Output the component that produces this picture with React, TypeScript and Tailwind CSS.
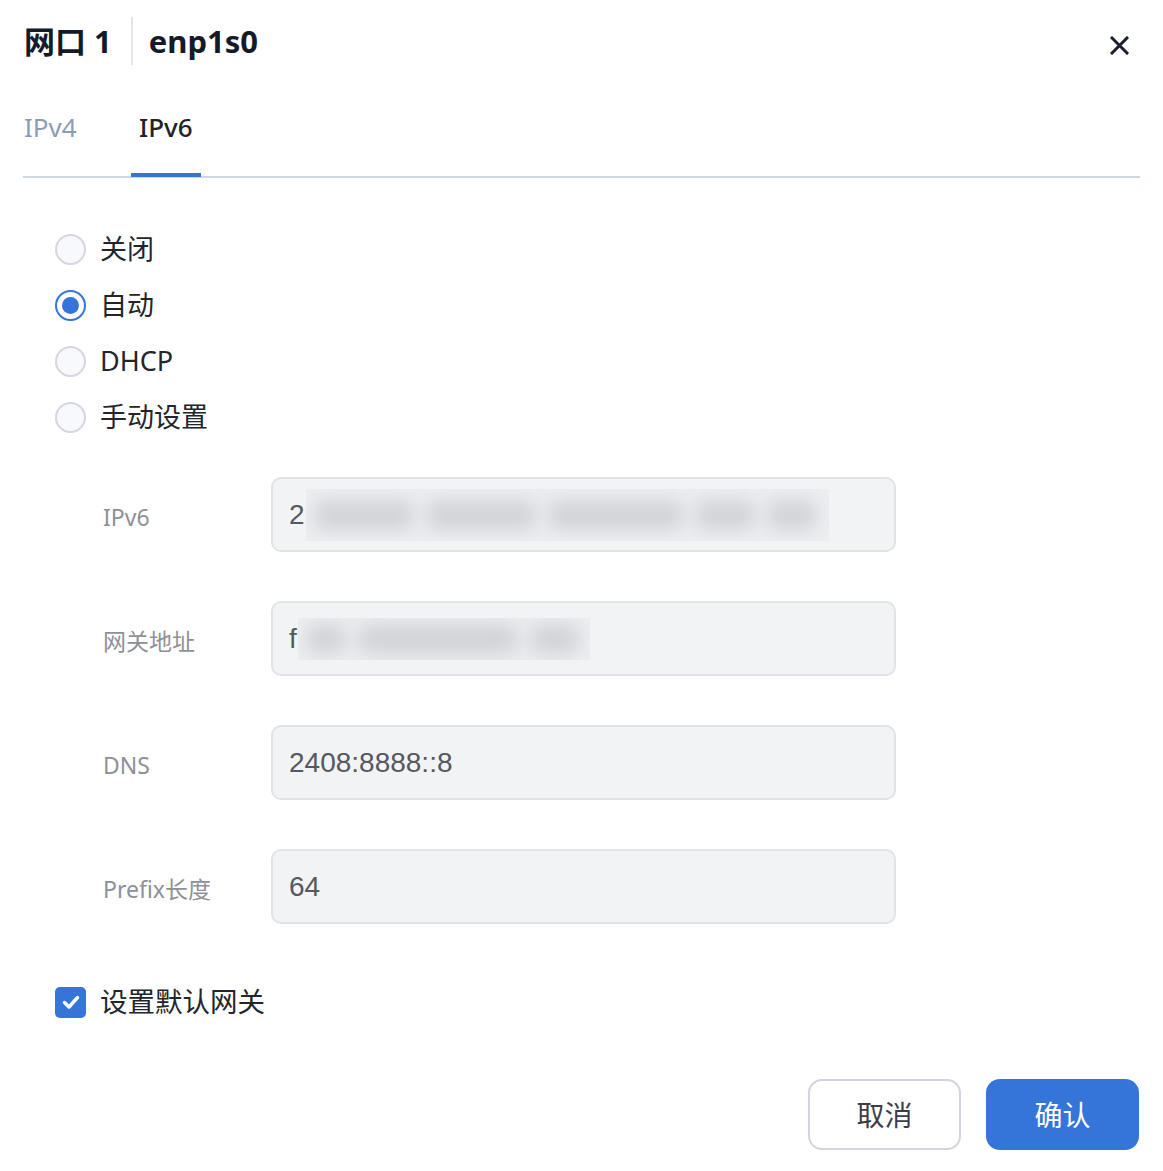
import React from "react";

const font = { fontFamily: '"Noto Sans", "Noto Sans CJK SC", sans-serif' };

function Radio({ checked, label }: { checked?: boolean; label: string }) {
  return (
    <div className="flex h-[56px] items-center">
      {checked ? (
        <span className="flex h-[31px] w-[31px] items-center justify-center rounded-full border-[2px] border-[#3574d9] bg-white">
          <span className="h-[17px] w-[17px] rounded-full bg-[#3574d9]" />
        </span>
      ) : (
        <span className="h-[31px] w-[31px] rounded-full border-[2px] border-[#d4d7e1] bg-[#f8f9fc]" />
      )}
      <span className="ml-[14px] text-[27px] leading-[36px] text-[#22252b]">{label}</span>
    </div>
  );
}

function Field({ label, children }: { label: string; children: React.ReactNode }) {
  return (
    <div className="ml-[80px] flex items-center">
      <div className="w-[168px] pt-[6px] text-[23px] text-[#8e9097]">{label}</div>
      <div
        className="flex h-[75px] w-[625px] items-center overflow-hidden rounded-[10px] border-[2px] border-[#e1e3e8] bg-[#f2f3f5] pl-[16px] text-[28px] text-[#555860]"
        style={{ fontFamily: '"Liberation Sans", Arial, sans-serif' }}
      >
        {children}
      </div>
    </div>
  );
}

function Blurred({ w, h, blobs }: { w: number; h: number; blobs: number[] }) {
  return (
    <span
      className="relative ml-[1px] flex items-center gap-[12px] overflow-hidden bg-[#edeef1] px-[8px]"
      style={{ width: w, height: h }}
    >
      {blobs.map((bw, i) => (
        <span
          key={i}
          className="h-[30px] shrink-0 rounded-[12px] bg-[#d2d3d8] blur-[9px]"
          style={{ width: bw }}
        />
      ))}
    </span>
  );
}

export default function App() {
  return (
    <div className="min-h-[1171px] w-[1163px] bg-white px-[23px]" style={font}>
      {/* Header */}
      <div className="flex h-[65px] items-end">
        <div className="flex h-[48px] w-full items-center">
          <span className="pl-[1px] text-[31px] font-bold leading-[40px] text-[#151a28]">网口 1</span>
          <span className="ml-[19px] h-[48px] w-[2px] bg-[#e3e5ea]" />
          <span className="ml-[16px] text-[31px] font-bold leading-[40px] text-[#151a28]">enp1s0</span>
          <span className="ml-auto mr-[11px] mt-[8px]">
            <svg width="19" height="19" viewBox="0 0 19 19">
              <path d="M2 2 L17 17 M17 2 L2 17" stroke="#1a1f2e" strokeWidth="3" strokeLinecap="square" />
            </svg>
          </span>
        </div>
      </div>

      {/* Tabs */}
      <div className="mt-[44px] flex border-b-[2px] border-[#cdd7e1]">
        <div className="w-[108px] pl-[1px] pb-[28px] text-[26px] leading-[36px] text-[#8c9db3]">IPv4</div>
        <div className="-mb-[1px] border-b-[4px] border-[#3574d9] px-[8px] pb-[28px] text-[26px] font-medium leading-[36px] text-[#1f2329]">
          IPv6
        </div>
      </div>

      {/* Radios */}
      <div className="mt-[43px] pl-[32px]">
        <Radio label="关闭" />
        <Radio checked label="自动" />
        <Radio label="DHCP" />
        <Radio label="手动设置" />
      </div>

      {/* Fields */}
      <div className="mt-[32px] flex flex-col gap-[49px]">
        <Field label="IPv6">
          <span>2</span>
          <Blurred w={523} h={52} blobs={[100, 110, 135, 60, 50]} />
        </Field>
        <Field label="网关地址">
          <span>f</span>
          <Blurred w={292} h={42} blobs={[40, 160, 50]} />
        </Field>
        <Field label="DNS">2408:8888::8</Field>
        <Field label="Prefix长度">64</Field>
      </div>

      {/* Checkbox */}
      <div className="mt-[50px] flex h-[56px] items-center pl-[32px]">
        <span className="flex h-[31px] w-[31px] items-center justify-center rounded-[5px] bg-[#3574d9]">
          <svg width="20" height="20" viewBox="0 0 20 20">
            <path d="M3.5 10.5 L8 15 L16.5 5.5" fill="none" stroke="white" strokeWidth="3.5" strokeLinecap="round" strokeLinejoin="round" />
          </svg>
        </span>
        <span className="ml-[14px] text-[27.5px] leading-[36px] text-[#22252b]">设置默认网关</span>
      </div>

      {/* Buttons */}
      <div className="mt-[49px] flex justify-end gap-[25px] pr-[1px]">
        <button className="h-[71px] w-[153px] rounded-[14px] border-[2px] border-[#d2d5df] bg-white text-[28px] text-[#3a3e4a]">
          取消
        </button>
        <button className="h-[71px] w-[153px] rounded-[14px] bg-[#3574d9] text-[28px] text-white">
          确认
        </button>
      </div>
    </div>
  );
}
